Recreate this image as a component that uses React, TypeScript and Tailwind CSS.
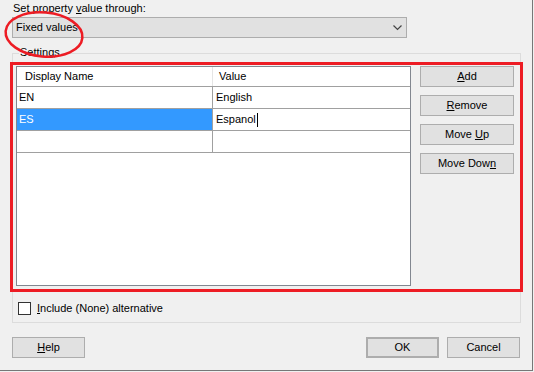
import React from 'react';

function Btn({ children, className = '' }: { children: React.ReactNode; className?: string }) {
  return (
    <div className={`h-[21px] flex items-center justify-center bg-[#e1e1e1] border border-[#adadad] ${className}`}>
      {children}
    </div>
  );
}

const rows = [
  { name: 'EN', value: 'English', selected: false },
  { name: 'ES', value: 'Espanol', selected: true },
  { name: '', value: '', selected: false },
];

export default function App() {
  return (
    <div className="w-[534px] h-[372px] bg-[#f0f0f0] relative overflow-hidden text-[11px] text-black font-['Liberation_Sans',Arial,sans-serif]">
      <div className="w-[533px] h-[371px] border-r border-b border-[#777777] pl-[12px]">
        <div className="h-[17px] pt-[2px] pl-[1px] leading-[13px]">
          Set property <u>v</u>alue through:
        </div>

        <div className="w-[395px] h-[21px] bg-[#e1e1e1] border border-[#adadad] flex items-center justify-between pl-[3px] pr-[4px]">
          <span>Fixed values</span>
          <svg width="9" height="6" viewBox="0 0 9 6">
            <polyline points="0.5,0.5 4.5,4.5 8.5,0.5" fill="none" stroke="#444444" strokeWidth="1.2" />
          </svg>
        </div>

        <div className="mt-[15px] w-[509px] h-[270px] border border-[#dcdcdc] relative">
          <span className="absolute -top-[8px] left-[6px] px-[1px] bg-[#f0f0f0] leading-[13px]">
            Settin<u>g</u>s
          </span>

          <div className="flex pt-[12px] pl-[3px]">
            <div className="w-[395px] h-[220px] border border-[#828790] bg-white">
              <div className="h-[20px] flex border-b border-[#a0a0a0]">
                <div className="w-[196px] border-r border-[#e5e5e5] pl-[8px] flex items-center">Display Name</div>
                <div className="flex-1 pl-[6px] flex items-center">Value</div>
              </div>
              {rows.map((r, i) => (
                <div key={i} className="h-[22px] flex border-b border-[#a0a0a0]">
                  <div
                    className={`w-[196px] border-r border-[#a0a0a0] pl-[2px] flex items-center ${
                      r.selected ? 'bg-[#3399ff] text-white' : ''
                    }`}
                  >
                    {r.name}
                  </div>
                  <div className="flex-1 pl-[3px] flex items-center">
                    {r.value}
                    {r.selected && <span className="w-px h-[14px] bg-black ml-[1px]" />}
                  </div>
                </div>
              ))}
            </div>

            <div className="ml-[9px] w-[94px] flex flex-col gap-[8px]">
              <Btn><span><u>A</u>dd</span></Btn>
              <Btn><span><u>R</u>emove</span></Btn>
              <Btn><span>Move <u>U</u>p</span></Btn>
              <Btn><span>Move Dow<u>n</u></span></Btn>
            </div>
          </div>

          <div className="flex items-center mt-[14px] ml-[5px]">
            <div className="w-[13px] h-[13px] bg-white border border-[#333333]" />
            <span className="ml-[6px]"><u>I</u>nclude (None) alternative</span>
          </div>
        </div>

        <div className="mt-[14px] w-[508px] flex justify-between">
          <Btn className="w-[73px]"><span><u>H</u>elp</span></Btn>
          <div className="flex gap-[8px]">
            <Btn className="w-[73px] border-2 border-[#0078d7]">OK</Btn>
            <Btn className="w-[73px]">Cancel</Btn>
          </div>
        </div>
      </div>

      <div className="absolute left-[10px] top-[62px] w-[513px] h-[230px] border-[3px] border-[#ed1c24] pointer-events-none" />
      <svg className="absolute left-0 top-0 pointer-events-none" width="100" height="70" viewBox="0 0 100 70">
        <ellipse cx="44" cy="34.5" rx="38.5" ry="22" transform="rotate(5 44 34.5)" fill="none" stroke="#ed1c24" strokeWidth="2.5" />
      </svg>
    </div>
  );
}
